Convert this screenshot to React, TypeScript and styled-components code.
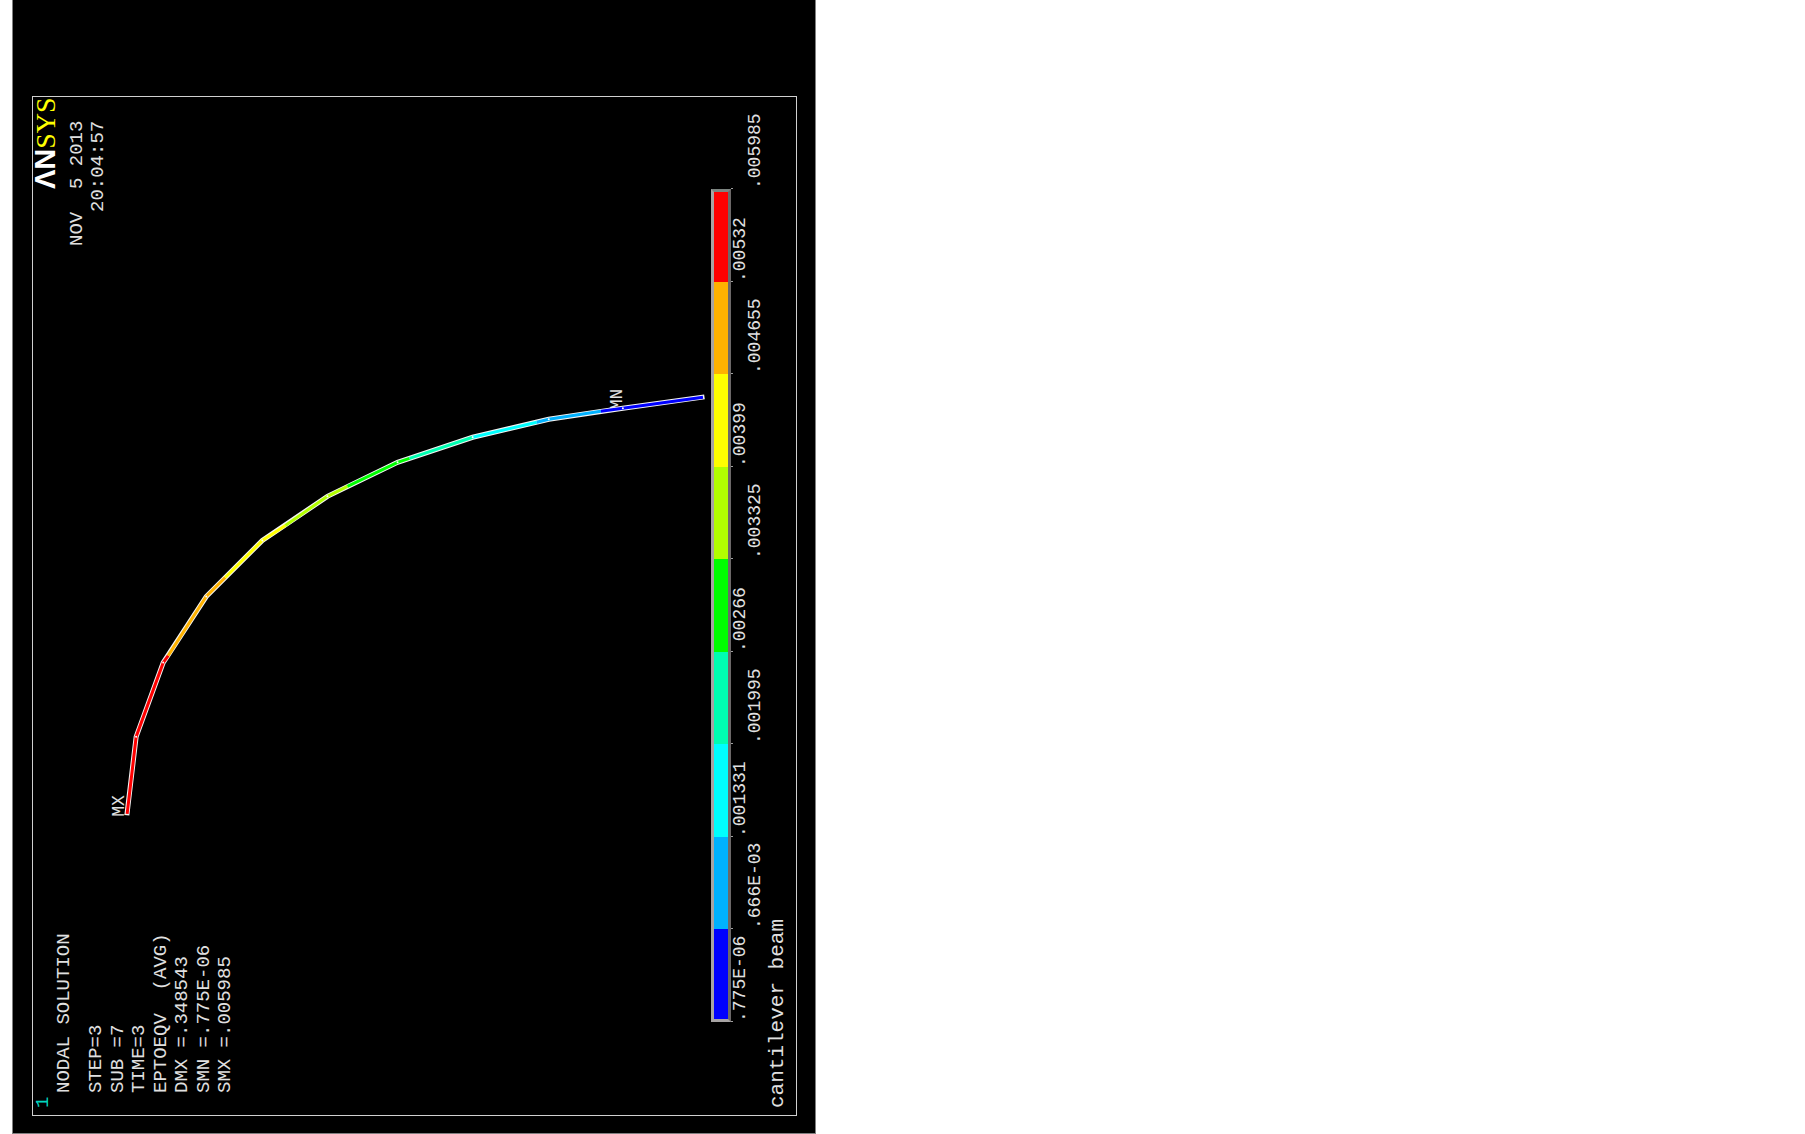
import React from "react";
import styled, { createGlobalStyle } from "styled-components";

const MONO = '"Liberation Mono", "Courier New", monospace';

const GlobalStyle = createGlobalStyle`
  *, *::before, *::after { box-sizing: border-box; }
  body { margin: 0; background: #fff; }
  ol, ul, p, h1, h2 { margin: 0; padding: 0; font: inherit; list-style: none; }
`;

const Page = styled.main`
  display: grid;
  grid-template-columns: 12px 803fr 990fr;
  min-height: 100vh;
`;

/* The sheet is turned a quarter turn: inline runs bottom to top, block runs left to right. */
const Sheet = styled.section`
  grid-column: 2;
  display: flex;
  writing-mode: vertical-rl;
  text-orientation: sideways;
  transform: rotate(180deg);
  padding-block: 19px 18px;
  padding-inline: 17px 96px;
  border: 1px solid #808080;
  border-inline-end: 0;
  background: #000;
  color: #e0e0e0;
  font: 19px/21px ${MONO};
  white-space: pre;
`;

const Frame = styled.div`
  flex: 1;
  display: flex;
  flex-direction: column;
  border: 1px solid #d0d0d0;
`;

const Plot = styled.div`
  flex: 1;
  min-block-size: 0;
  display: grid;
  grid-template-columns: 195px 1fr 153px;
`;

const Info = styled.div`
  padding-inline-start: 22px;
`;

const WindowNumber = styled.p`
  margin-inline-start: -15px;
  color: #00d8c0;
`;

const Title = styled.h1`
  margin-block-end: 11px;
`;

const Results = styled.ul`
  display: flex;
  flex-direction: column;
  justify-content: space-between;
  block-size: 150px;
`;

const Stamp = styled.div`
  text-align: end;
  padding-inline-end: 24px;
`;

const Brand = styled.h2`
  margin-inline-end: -24px;
  margin-block-end: 9px;
  color: #fff;
  font: bold 29px/24px "Liberation Sans", Arial, sans-serif;
`;

const BrandTail = styled.span`
  color: #ff0;
  font: 28px/24px "Liberation Serif", "Times New Roman", serif;
`;

const Drawing = styled.svg`
  display: block;
  width: 100%;
  height: 100%;
  min-width: 0;
  min-height: 0;
  writing-mode: horizontal-tb;
  transform: rotate(180deg);
`;

const NodeLabel = styled.text`
  fill: #e0e0e0;
  font: 18px ${MONO};
`;

const Legend = styled.div`
  margin-inline-start: 93px;
  display: grid;
  grid-template-columns: repeat(10, 1fr);
  grid-template-rows: 20px 2px 15px 16px;
  font-size: 18px;
  line-height: 15px;
`;

const Bar = styled.div`
  grid-area: 1 / 1 / 2 / 10;
  display: flex;
  position: relative;
  &::after {
    content: "";
    position: absolute;
    inset: 0;
    border: 3px solid #a8a4a4;
    border-block-end-color: #6c6868;
    border-inline-end-color: #7c8480;
  }
`;

const Band = styled.span<{ $color: string }>`
  flex: 1;
  background: ${(p) => p.$color};
`;

const Tick = styled.span<{ $col: number }>`
  grid-row: 2;
  grid-column: ${(p) => p.$col};
  border-inline-start: 1px solid #a0a0a0;
`;

const Value = styled.span<{ $col: number }>`
  grid-row: ${(p) => (p.$col % 2 ? 3 : 4)};
  grid-column: ${(p) => p.$col};
`;

const Caption = styled.p`
  padding-inline-start: 7px;
  margin-block: 3px 7px;
  font-size: 21px;
  line-height: 22px;
`;

const bands = ["#0000ff", "#00b2ff", "#00ffff", "#00ffb2", "#00ff00", "#b2ff00", "#ffff00", "#ffb200", "#ff0000"];
const values = [".775E-06", ".666E-03", ".001331", ".001995", ".00266", ".003325", ".00399", ".004655", ".00532", ".005985"];
const results = ["STEP=3", "SUB =7", "TIME=3", "EPTOEQV  (AVG)", "DMX =.348543", "SMN =.775E-06", "SMX =.005985"];

const nodes = [
  [127, 813], [136, 737], [163, 663], [206, 597], [262, 541], [327, 497],
  [397, 463], [472, 438], [548, 420], [622, 409], [701, 398],
];

const spans: { color: string; points: string }[] = [
  { color: "#ff0000", points: "127,814 136,737 163,663 168,656" },
  { color: "#ffb200", points: "168,656 206,597 225,578" },
  { color: "#ffff00", points: "225,578 262,541 285,526" },
  { color: "#b2ff00", points: "285,526 327,497 347,487" },
  { color: "#00ff00", points: "347,487 397,463 409,459" },
  { color: "#00ffb2", points: "409,459 472,438" },
  { color: "#00ffff", points: "472,438 536,423" },
  { color: "#00b2ff", points: "536,423 548,420 600,412" },
  { color: "#0000ff", points: "600,412 622,409 702,398" },
];

function Beam() {
  return (
    <Drawing viewBox="33 251 677 669" role="img" aria-label="Deflected cantilever beam">
      <NodeLabel transform="translate(124 817) rotate(-90)">MX</NodeLabel>
      <NodeLabel transform="translate(621 411) rotate(-90)">MN</NodeLabel>
      <polyline points={nodes.map((n) => n.join(",")).join(" ")} fill="none" stroke="#f4f4f4" strokeWidth="5" strokeLinecap="square" />
      {spans.map((s) => (
        <polyline key={s.color} points={s.points} fill="none" stroke={s.color} strokeWidth="3" />
      ))}
      {nodes.slice(1, -1).map(([x, y]) => (
        <circle key={x} cx={x} cy={y} r="1" fill="#fff" />
      ))}
    </Drawing>
  );
}

export default function App() {
  return (
    <>
      <GlobalStyle />
      <Page>
        <Sheet>
          <Frame>
            <Plot>
              <Info>
                <WindowNumber>1</WindowNumber>
                <Title>NODAL SOLUTION</Title>
                <Results>
                  {results.map((r) => (
                    <li key={r}>{r}</li>
                  ))}
                </Results>
              </Info>
              <Beam />
              <Stamp>
                <Brand>ΛN<BrandTail>SYS</BrandTail></Brand>
                <p>NOV  5 2013</p>
                <p>20:04:57</p>
              </Stamp>
            </Plot>
            <Legend>
              <Bar>
                {bands.map((c) => (
                  <Band key={c} $color={c} />
                ))}
              </Bar>
              {values.map((v, i) => (
                <React.Fragment key={v}>
                  <Tick $col={i + 1} />
                  <Value $col={i + 1}>{v}</Value>
                </React.Fragment>
              ))}
            </Legend>
            <Caption>cantilever beam</Caption>
          </Frame>
        </Sheet>
      </Page>
    </>
  );
}
